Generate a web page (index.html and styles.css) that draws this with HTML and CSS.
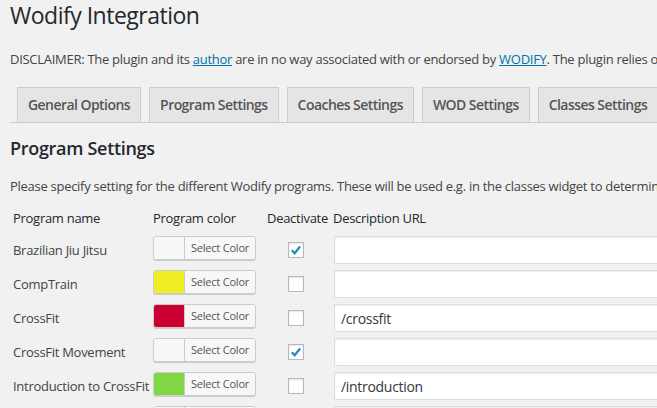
FILE: index.html
```html
<!DOCTYPE html>
<html lang="en">
<head>
  <meta charset="UTF-8" />
  <meta name="viewport" content="width=device-width, initial-scale=1.0" />
  <title>Wodify Integration</title>
  <link rel="stylesheet" href="styles.css">
</head>
<body>
  <div class="wrap">
    <h1>Wodify Integration</h1>
    <p class="disclaimer">DISCLAIMER: The plugin and its <a href="#">author</a> are in no way associated with or endorsed by <a href="#">WODIFY</a>. The plugin relies on the public Wodify API to fetch its data.</p>

    <nav class="nav-tabs">
      <a class="nav-tab" href="#">General Options</a>
      <a class="nav-tab active" href="#">Program Settings</a>
      <a class="nav-tab" href="#">Coaches Settings</a>
      <a class="nav-tab" href="#">WOD Settings</a>
      <a class="nav-tab" href="#">Classes Settings</a>
      <a class="nav-tab" href="#">Advanced</a>
    </nav>

    <h2>Program Settings</h2>
    <p class="intro">Please specify setting for the different Wodify programs. These will be used e.g. in the classes widget to determine the colors and links.</p>

    <table class="programs">
      <thead>
        <tr>
          <th class="c-name">Program name</th>
          <th class="c-color">Program color</th>
          <th class="c-off">Deactivate</th>
          <th class="c-url">Description URL</th>
        </tr>
      </thead>
      <tbody id="rows"></tbody>
    </table>
  </div>

  <script>
    const programs = [
      { name: "Brazilian Jiu Jitsu", color: "#f7f7f7", off: true, url: "" },
      { name: "CompTrain", color: "#eeee22", off: false, url: "" },
      { name: "CrossFit", color: "#cc0033", off: false, url: "/crossfit" },
      { name: "CrossFit Movement", color: "#f7f7f7", off: true, url: "" },
      { name: "Introduction to CrossFit", color: "#81d742", off: false, url: "/introduction" },
      { name: "Kids", color: "#f7f7f7", off: false, url: "" }
    ];

    const check = '<svg viewBox="0 0 16 16" width="16" height="16"><path d="M3.8 8.2l2.9 3 5.4-6.6" fill="none" stroke="#1e8cbe" stroke-width="2.3"/></svg>';

    const rows = document.getElementById("rows");
    programs.forEach(p => {
      const tr = document.createElement("tr");
      tr.innerHTML = `
        <td class="c-name">${p.name}</td>
        <td class="c-color">
          <span class="picker"><i class="swatch" style="background:${p.color}"></i><span class="pick-label">Select Color</span></span>
        </td>
        <td class="c-off"><span class="checkbox">${p.off ? check : ""}</span></td>
        <td class="c-url"><input type="text" value="${p.url}" /></td>
      `;
      rows.appendChild(tr);
    });
  </script>
</body>
</html>
```
FILE: styles.css
```css
* { box-sizing: border-box; margin: 0; padding: 0; }
html, body { overflow: hidden; }
body { font-family: "Open Sans", "Noto Sans", sans-serif; font-size: 13px; letter-spacing: -0.28px; background: #f1f1f1; color: #444; }
.wrap { padding: 0 0 0 10px; white-space: nowrap; }
a { color: #0073aa; }

h1 { font-size: 23px; font-weight: 400; letter-spacing: -0.5px; line-height: 29px; color: #23282d; padding: 1px 0 0; }
.disclaimer { margin-top: 19px; line-height: 20px; }

.nav-tabs { margin-top: 18px; border-bottom: 1px solid #ccc; padding-left: 7px; display: flex; gap: 8px; }
.nav-tab { display: block; flex: none; font-size: 14px; font-weight: 600; letter-spacing: -0.55px; line-height: 24px; padding: 5px 10px; border: 1px solid #ccc; border-bottom: none; background: #e5e5e5; color: #555; text-decoration: none; }

h2 { font-size: 18px; font-weight: 600; letter-spacing: -0.3px; color: #23282d; line-height: 24px; margin-top: 13px; }
.intro { margin-top: 16px; line-height: 20px; }

.programs { margin-top: 6px; border-collapse: collapse; table-layout: fixed; width: 900px; }
.programs th { font-weight: 400; text-align: left; color: #23282d; height: 31px; vertical-align: middle; }
.programs td { height: 34px; vertical-align: middle; }
.c-name { width: 143px; padding-left: 3px; }
.c-color { width: 114px; }
.c-off { width: 66px; }
.c-url { width: 577px; }
.programs td.c-off { padding-left: 21px; }
.programs td.c-url { padding-left: 1px; }

.picker { display: flex; width: 103px; height: 24px; margin-bottom: 4px; border: 1px solid #ccc; border-radius: 3px; background: #f7f7f7; box-shadow: 0 1px 0 #ccc; overflow: hidden; }
.swatch { width: 30px; flex: none; }
.pick-label { flex: 1; border-left: 1px solid #ccc; background: #f7f7f7; color: #555; font-size: 11px; letter-spacing: -0.2px; line-height: 22px; text-align: center; }

.checkbox { display: block; width: 16px; height: 16px; border: 1px solid #b4b9be; background: #fff; box-shadow: inset 0 1px 2px rgba(0,0,0,0.1); }
.checkbox svg { display: block; margin: -1px; }

input { display: block; width: 420px; height: 28px; border: 1px solid #ddd; box-shadow: inset 0 1px 2px rgba(0,0,0,0.07); background: #fff; font: 14px "Open Sans", "Noto Sans", sans-serif; letter-spacing: -0.3px; color: #32373c; padding: 0 6px; }
```
